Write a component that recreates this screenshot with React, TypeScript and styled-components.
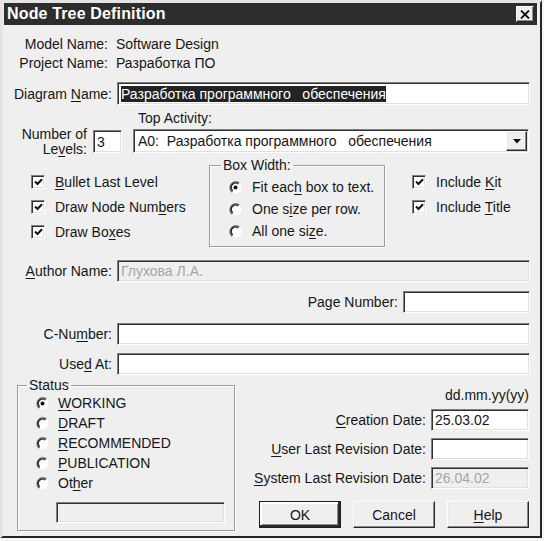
import React from "react";
import styled, { createGlobalStyle, css } from "styled-components";

const BG = "#efefef";
const INK = "#161616";

const GlobalStyle = createGlobalStyle`
  html, body { margin: 0; padding: 0; background: #f6f6f6; }
  body {
    font-family: "Liberation Sans", Arial, sans-serif;
    font-size: 14px;
    color: ${INK};
  }
  *, *::before, *::after { box-sizing: border-box; }
`;

const sunken = css`
  border-style: solid;
  border-width: 1px;
  border-color: #808080 #ffffff #ffffff #808080;
  box-shadow: inset 1px 1px 0 #303030, inset -1px -1px 0 #e0e0e0;
`;

const raised = css`
  border-style: solid;
  border-width: 1px;
  border-color: #ffffff #2a2a2a #2a2a2a #ffffff;
  box-shadow: inset -1px -1px 0 #8a8a8a, inset 1px 1px 0 #e8e8e8;
`;

const Window = styled.div`
  width: 542px;
  height: 538px;
  background: ${BG};
  border-style: solid;
  border-width: 3px 2px 2px 3px;
  border-color: #e4e4e4 #262626 #262626 #e4e4e4;
  padding: 0 1px;
  display: flex;
  flex-direction: column;
  overflow: hidden;
`;

const TitleBar = styled.div`
  flex: none;
  height: 22px;
  margin-right: 2px;
  padding: 0 3px;
  background: #2d2d2d;
  display: flex;
  align-items: center;
  justify-content: space-between;
`;

const Title = styled.span`
  color: #ffffff;
  font-weight: bold;
  font-size: 16px;
  letter-spacing: 0.15px;
`;

const CloseButton = styled.div`
  ${raised};
  width: 18px;
  height: 16px;
  background: ${BG};
  display: flex;
  align-items: center;
  justify-content: center;
`;

const Row = styled.div<{ $mt?: number; $h: number; $align?: string }>`
  flex: none;
  display: flex;
  align-items: ${(p) => p.$align ?? "center"};
  margin-top: ${(p) => p.$mt ?? 0}px;
  height: ${(p) => p.$h}px;
`;

const Label = styled.label<{ $w: number }>`
  flex: none;
  width: ${(p) => p.$w}px;
  text-align: right;
  white-space: nowrap;
`;

const Value = styled.span<{ $ml: number }>`
  margin-left: ${(p) => p.$ml}px;
  white-space: pre;
`;

const U = styled.span`
  text-decoration: underline;
  text-underline-offset: 2px;
`;

const TextBox = styled.div<{
  $w: number;
  $h?: number;
  $ml?: number;
  $mt?: number;
  $mb?: number;
  $disabled?: boolean;
}>`
  ${sunken};
  flex: none;
  width: ${(p) => p.$w}px;
  height: ${(p) => p.$h ?? 22}px;
  margin: ${(p) => p.$mt ?? 0}px 0 ${(p) => p.$mb ?? 0}px ${(p) => p.$ml ?? 0}px;
  padding-left: 3px;
  background: ${(p) => (p.$disabled ? BG : "#ffffff")};
  color: ${(p) => (p.$disabled ? "#a6a6a6" : INK)};
  display: flex;
  align-items: center;
  white-space: pre;
  overflow: hidden;
`;

const Selected = styled.span`
  background: #232323;
  color: #ffffff;
  line-height: 16px;
`;

const LevelsLabel = styled.label`
  flex: none;
  width: 83px;
  text-align: right;
  line-height: 15px;
`;

const ActivityCol = styled.div`
  flex: none;
  width: 396px;
  margin-left: 11px;
  display: flex;
  flex-direction: column;
`;

const SmallLabel = styled.label`
  padding-left: 5px;
  line-height: 15px;
  margin-bottom: 3px;
`;

const Select = styled.div`
  ${sunken};
  height: 24px;
  margin-bottom: 4px;
  background: #ffffff;
  display: flex;
  align-items: center;
  justify-content: space-between;
  padding: 0 1px 0 4px;
  white-space: pre;
`;

const ArrowButton = styled.div`
  ${raised};
  width: 21px;
  height: 20px;
  background: ${BG};
  display: flex;
  align-items: center;
  justify-content: center;
`;

const OptionsRow = styled.div`
  flex: none;
  display: flex;
  align-items: flex-start;
  height: 90px;
`;

const CheckCol = styled.div<{ $ml: number; $w?: number }>`
  flex: none;
  margin: 12px 0 0 ${(p) => p.$ml}px;
  width: ${(p) => (p.$w ? `${p.$w}px` : "auto")};
  display: flex;
  flex-direction: column;
`;

const CheckRow = styled.div`
  height: 25px;
  display: flex;
  align-items: center;
  white-space: nowrap;
`;

const Box = styled.span`
  ${sunken};
  flex: none;
  width: 14px;
  height: 14px;
  background: #ffffff;
  display: flex;
  align-items: center;
  justify-content: center;
  margin-right: 10px;
`;

const Group = styled.fieldset<{ $w: number; $h: number; $ml?: number; $pl: number; $pt: number }>`
  flex: none;
  margin: 0 0 0 ${(p) => p.$ml ?? 0}px;
  width: ${(p) => p.$w}px;
  height: ${(p) => p.$h}px;
  padding: ${(p) => p.$pt}px 0 0 ${(p) => p.$pl}px;
  border: 1px solid #9c9c9c;
  box-shadow: inset 1px 1px 0 #ffffff, 1px 1px 0 #ffffff;
  min-width: 0;
`;

const Legend = styled.legend<{ $ml: number }>`
  padding: 0 2px;
  margin-left: ${(p) => p.$ml}px;
  line-height: 16px;
`;

const RadioRow = styled.div<{ $h: number; $gap: number }>`
  height: ${(p) => p.$h}px;
  display: flex;
  align-items: center;
  white-space: nowrap;
  gap: ${(p) => p.$gap}px;
`;

const RadioIcon = styled.svg`
  flex: none;
  margin-left: -1px;
`;

const BottomSection = styled.div`
  flex: none;
  display: flex;
  align-items: flex-start;
  margin-top: 2px;
`;

const RightCol = styled.div`
  flex: none;
  width: 294px;
  margin-top: 10px;
  display: flex;
  flex-direction: column;
`;

const Hint = styled.div`
  height: 16px;
  line-height: 16px;
  text-align: right;
`;

const ButtonRow = styled.div`
  display: flex;
  gap: 12px;
  margin: 12px 0 0 24px;
`;

const Button = styled.div<{ $default?: boolean }>`
  width: 82px;
  height: 27px;
  background: ${BG};
  display: flex;
  align-items: center;
  justify-content: center;
  ${(p) =>
    p.$default
      ? css`
          border: 1px solid #1e1e1e;
          box-shadow: inset -2px -2px 0 #2a2a2a, inset 2px 2px 0 #ffffff,
            inset -3px -3px 0 #8a8a8a;
        `
      : raised};
`;

const Check = () => (
  <svg width="9" height="8" viewBox="0 0 9 8">
    <path d="M1 3.5 L3.5 6 L8 1.2" fill="none" stroke="#111" strokeWidth="2" />
  </svg>
);

const CheckItem = ({ children }: { children: React.ReactNode }) => (
  <CheckRow>
    <Box>
      <Check />
    </Box>
    <span>{children}</span>
  </CheckRow>
);

const Radio = ({
  on,
  children,
  h,
  gap,
}: {
  on?: boolean;
  children: React.ReactNode;
  h: number;
  gap: number;
}) => (
  <RadioRow $h={h} $gap={gap}>
    <RadioIcon width="13" height="13" viewBox="0 0 13 13">
      <circle cx="6.5" cy="6.5" r="6" fill="#ffffff" />
      <path d="M10.2 2.2 A5.3 5.3 0 1 0 3.4 11" fill="none" stroke="#5a5a5a" strokeWidth="1.6" />
      <path d="M9.2 3.2 A4 4 0 1 0 3.8 9.6" fill="none" stroke="#1e1e1e" strokeWidth="1.1" />
      {on && <circle cx="6.5" cy="6.5" r="2" fill="#111" />}
    </RadioIcon>
    <span>{children}</span>
  </RadioRow>
);

export default function App() {
  return (
    <>
      <GlobalStyle />
      <Window>
        <TitleBar>
          <Title>Node Tree Definition</Title>
          <CloseButton>
            <svg width="10" height="9" viewBox="0 0 10 9">
              <path d="M1 0.5 L9 8.5 M9 0.5 L1 8.5" stroke="#111" strokeWidth="1.8" />
            </svg>
          </CloseButton>
        </TitleBar>

        <Row $mt={9} $h={19}>
          <Label $w={104}>Model Name:</Label>
          <Value $ml={8}>Software Design</Value>
        </Row>
        <Row $h={19}>
          <Label $w={104}>Project Name:</Label>
          <Value $ml={8}>Разработка ПО</Value>
        </Row>

        <Row $mt={10} $h={23}>
          <Label $w={108}>
            Diagram <U>N</U>ame:
          </Label>
          <TextBox $w={413} $h={23} $ml={5}>
            <Selected>Разработка программного   обеспечения</Selected>
          </TextBox>
        </Row>

        <Row $mt={3} $h={49} $align="flex-end">
          <LevelsLabel>
            Number of
            <br />
            Le<U>v</U>els:
          </LevelsLabel>
          <TextBox $w={29} $h={23} $ml={6} $mb={4}>
            3
          </TextBox>
          <ActivityCol>
            <SmallLabel>Top Activity:</SmallLabel>
            <Select>
              <span>A0:  Разработка программного   обеспечения</span>
              <ArrowButton>
                <svg width="8" height="5" viewBox="0 0 8 5">
                  <path d="M0 0 H8 L4 4.5 Z" fill="#111" />
                </svg>
              </ArrowButton>
            </Select>
          </ActivityCol>
        </Row>

        <OptionsRow>
          <CheckCol $ml={27} $w={178}>
            <CheckItem>
              <U>B</U>ullet Last Level
            </CheckItem>
            <CheckItem>
              Draw Node Num<U>b</U>ers
            </CheckItem>
            <CheckItem>
              Draw Bo<U>x</U>es
            </CheckItem>
          </CheckCol>
          <Group $w={176} $h={90} $pl={20} $pt={3}>
            <Legend $ml={-9}>Box Width:</Legend>
            <Radio on h={22} gap={10}>
              Fit eac<U>h</U> box to text.
            </Radio>
            <Radio h={22} gap={10}>
              One s<U>i</U>ze per row.
            </Radio>
            <Radio h={22} gap={10}>
              All one si<U>z</U>e.
            </Radio>
          </Group>
          <CheckCol $ml={27}>
            <CheckItem>
              Include <U>K</U>it
            </CheckItem>
            <CheckItem>
              Include <U>T</U>itle
            </CheckItem>
          </CheckCol>
        </OptionsRow>

        <Row $mt={13} $h={22}>
          <Label $w={108}>
            <U>A</U>uthor Name:
          </Label>
          <TextBox $w={413} $ml={5} $disabled>
            Глухова Л.А.
          </TextBox>
        </Row>
        <Row $mt={9} $h={22}>
          <Label $w={394}>Page Number:</Label>
          <TextBox $w={127} $ml={5} />
        </Row>
        <Row $mt={10} $h={22}>
          <Label $w={108}>
            C-Nu<U>m</U>ber:
          </Label>
          <TextBox $w={413} $ml={5} />
        </Row>
        <Row $mt={8} $h={22}>
          <Label $w={108}>
            Use<U>d</U> At:
          </Label>
          <TextBox $w={413} $ml={5} />
        </Row>

        <BottomSection>
          <Group $w={218} $h={154} $ml={13} $pl={19} $pt={0}>
            <Legend $ml={-10}>Status</Legend>
            <Radio on h={20} gap={9}>
              <U>W</U>ORKING
            </Radio>
            <Radio h={20} gap={9}>
              <U>D</U>RAFT
            </Radio>
            <Radio h={20} gap={9}>
              <U>R</U>ECOMMENDED
            </Radio>
            <Radio h={20} gap={9}>
              <U>P</U>UBLICATION
            </Radio>
            <Radio h={20} gap={9}>
              Ot<U>h</U>er
            </Radio>
            <TextBox $w={169} $h={21} $ml={19} $mt={9} $disabled />
          </Group>
          <RightCol>
            <Hint>dd.mm.yy(yy)</Hint>
            <Row $mt={6} $h={22}>
              <Label $w={191}>
                <U>C</U>reation Date:
              </Label>
              <TextBox $w={98} $ml={5}>
                25.03.02
              </TextBox>
            </Row>
            <Row $mt={7} $h={22}>
              <Label $w={191}>
                <U>U</U>ser Last Revision Date:
              </Label>
              <TextBox $w={98} $ml={5} />
            </Row>
            <Row $mt={7} $h={22}>
              <Label $w={191}>
                <U>S</U>ystem Last Revision Date:
              </Label>
              <TextBox $w={98} $ml={5} $disabled>
                26.04.02
              </TextBox>
            </Row>
            <ButtonRow>
              <Button $default>OK</Button>
              <Button>Cancel</Button>
              <Button>
                <span>
                  <U>H</U>elp
                </span>
              </Button>
            </ButtonRow>
          </RightCol>
        </BottomSection>
      </Window>
    </>
  );
}
